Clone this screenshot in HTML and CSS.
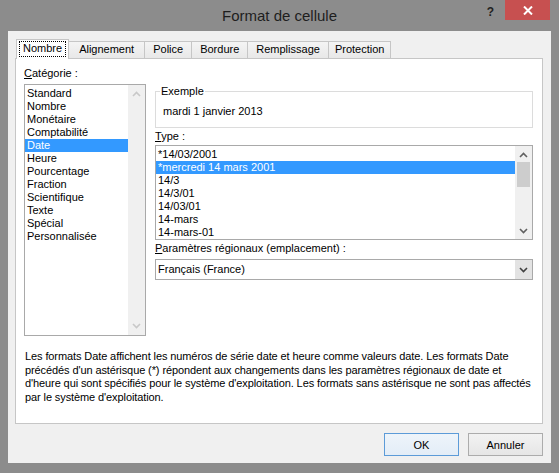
FILE: index.html
```html
<!DOCTYPE html>
<html lang="fr">
<head>
    <meta charset="UTF-8">
    <title>Format de cellule</title>
    <link rel="stylesheet" href="styles.css">
</head>
<body>
    <div class="window">
        <div class="titlebar">
            <span></span>
            <div class="title">Format de cellule</div>
            <div class="controls">
                <span class="help">?</span>
                <span class="close">
                    <svg width="10" height="9" viewBox="0 0 10 9"><path d="M1 0.5 L9 8.5 M9 0.5 L1 8.5" stroke="#fff" stroke-width="2"/></svg>
                </span>
            </div>
        </div>

        <div class="client">
            <div class="tabs">
                <div class="tab tab-active"><span class="focus">Nombre</span></div>
                <div class="tab tab-wide">Alignement</div>
                <div class="tab">Police</div>
                <div class="tab">Bordure</div>
                <div class="tab">Remplissage</div>
                <div class="tab tab-narrow">Protection</div>
            </div>

            <div class="panel">
                <div class="columns">
                    <div class="col-left">
                        <div class="label"><u>C</u>atégorie :</div>
                        <div class="listbox cat-list">
                            <ul class="items">
                                <li>Standard</li>
                                <li>Nombre</li>
                                <li>Monétaire</li>
                                <li>Comptabilité</li>
                                <li class="selected">Date</li>
                                <li>Heure</li>
                                <li>Pourcentage</li>
                                <li>Fraction</li>
                                <li>Scientifique</li>
                                <li>Texte</li>
                                <li>Spécial</li>
                                <li>Personnalisée</li>
                            </ul>
                            <div class="scrollbar scrollbar-disabled">
                                <svg class="arrow" width="9" height="6" viewBox="0 0 9 6"><path d="M1 5 L4.5 1.5 L8 5" fill="none" stroke="currentColor" stroke-width="1.6"/></svg>
                                <span class="track"></span>
                                <svg class="arrow" width="9" height="6" viewBox="0 0 9 6"><path d="M1 1 L4.5 4.5 L8 1" fill="none" stroke="currentColor" stroke-width="1.6"/></svg>
                            </div>
                        </div>
                    </div>

                    <div class="col-right">
                        <fieldset class="sample">
                            <legend>Exemple</legend>
                            <div class="sample-value">mardi 1 janvier 2013</div>
                        </fieldset>

                        <div class="label label-type"><u>T</u>ype :</div>
                        <div class="listbox type-list">
                            <ul class="items">
                                <li>*14/03/2001</li>
                                <li class="selected">*mercredi 14 mars 2001</li>
                                <li>14/3</li>
                                <li>14/3/01</li>
                                <li>14/03/01</li>
                                <li>14-mars</li>
                                <li>14-mars-01</li>
                            </ul>
                            <div class="scrollbar">
                                <svg class="arrow" width="9" height="6" viewBox="0 0 9 6"><path d="M1 5 L4.5 1.5 L8 5" fill="none" stroke="currentColor" stroke-width="1.6"/></svg>
                                <span class="track"><span class="thumb"></span></span>
                                <svg class="arrow" width="9" height="6" viewBox="0 0 9 6"><path d="M1 1 L4.5 4.5 L8 1" fill="none" stroke="currentColor" stroke-width="1.6"/></svg>
                            </div>
                        </div>

                        <div class="label label-locale"><u>P</u>aramètres régionaux (emplacement) :</div>
                        <div class="select">
                            <span class="select-value">Français (France)</span>
                            <span class="select-btn">
                                <svg width="9" height="6" viewBox="0 0 9 6"><path d="M1 1 L4.5 4.5 L8 1" fill="none" stroke="currentColor" stroke-width="1.6"/></svg>
                            </span>
                        </div>
                    </div>
                </div>

                <p class="desc">
                    Les formats Date affichent les numéros de série date et heure comme valeurs date. Les formats Date<br>
                    précédés d'un astérisque (*) répondent aux changements dans les paramètres régionaux de date et<br>
                    d'heure qui sont spécifiés pour le système d'exploitation. Les formats sans astérisque ne sont pas affectés<br>
                    par le système d'exploitation.
                </p>
            </div>

            <div class="actions">
                <button class="btn btn-default">OK</button>
                <button class="btn">Annuler</button>
            </div>
        </div>
    </div>
</body>
</html>
```

FILE: styles.css
```css
:root {
    --frame: #8c8c8c;
    --client: #f0f0f0;
    --border: #c6c6c6;
    --list-border: #a9a9a9;
    --highlight: #3399ff;
    --font: #000;
}

*,
*::before,
*::after {
    box-sizing: border-box;
    padding: 0;
    margin: 0;
}

body {
    background-color: var(--frame);
    color: var(--font);
    font-family: 'Liberation Sans', Arial, sans-serif;
    font-size: 11px;
    line-height: 13px;
}

button {
    color: inherit;
    font-family: inherit;
    font-size: inherit;
    cursor: pointer;
    outline: none;
}

.window {
    width: 559px;
    height: 473px;
    background-color: var(--frame);
    display: flex;
    flex-direction: column;
}

/* title bar */
.titlebar {
    height: 31px;
    display: grid;
    grid-template-columns: 1fr auto 1fr;
    align-items: start;
}

.title {
    font-size: 15px;
    line-height: 18px;
    padding-top: 7px;
    color: #1e1e1e;
}

.controls {
    display: flex;
    justify-content: flex-end;
    align-items: flex-start;
    padding-right: 9px;
}

.help {
    font-weight: bold;
    font-size: 12px;
    line-height: 14px;
    padding-top: 5px;
    margin-right: 11px;
    color: #222;
}

.close {
    width: 45px;
    height: 20px;
    background-color: #c75050;
    display: flex;
    align-items: center;
    justify-content: center;
}

/* client area */
.client {
    flex: 1;
    margin: 0 8px 10px;
    padding: 8px 8px 7px 7px;
    background-color: var(--client);
    display: flex;
    flex-direction: column;
}

.tabs {
    display: flex;
    align-items: flex-end;
    height: 20px;
    margin-bottom: -1px;
    padding-left: 1px;
    position: relative;
    z-index: 1;
}

.tab {
    height: 17px;
    margin-bottom: 1px;
    padding: 0 8px;
    border: 1px solid var(--border);
    border-bottom: none;
    border-left: none;
    background: linear-gradient(#f4f4f4, #e8e8e8);
    line-height: 15px;
}

.tab-wide {
    padding: 0 10px;
}

.tab-narrow {
    padding: 0 6px;
}

.tab-active {
    height: 20px;
    margin-bottom: 0;
    padding: 1px 2px 0;
    border-left: 1px solid var(--border);
    background: #fff;
}

.focus {
    display: block;
    padding: 1px 4px 2px;
    outline: 1px dotted #000;
    outline-offset: -1px;
    line-height: 13px;
}

.panel {
    height: 366px;
    border: 1px solid var(--border);
    background-color: #fff;
    padding: 8px 9px 0 8px;
}

.columns {
    display: flex;
    gap: 9px;
}

.col-left {
    width: 122px;
}

.col-right {
    flex: 1;
    padding-top: 18px;
}

.label {
    margin-bottom: 4px;
}

.label-type {
    margin-top: 2px;
    margin-bottom: 2px;
}

.label-locale {
    margin-top: 2px;
    margin-bottom: 4px;
}

/* list boxes */
.listbox {
    display: flex;
    border: 1px solid var(--list-border);
    background-color: #fff;
}

.cat-list {
    height: 252px;
}

.type-list {
    height: 95px;
}

.items {
    flex: 1;
    list-style: none;
    padding-top: 2px;
}

.items li {
    height: 13px;
    padding-left: 2px;
    white-space: nowrap;
}

.items .selected {
    background-color: var(--highlight);
    color: #fff;
}

.scrollbar {
    width: 17px;
    display: flex;
    flex-direction: column;
    align-items: center;
    background-color: #f0f0f0;
    color: #606060;
    padding: 6px 0 5px;
}

.scrollbar-disabled {
    color: #c8c8c8;
    padding-bottom: 6px;
}

.track {
    flex: 1;
    width: 100%;
    padding: 4px 2px 0;
}

.thumb {
    display: block;
    height: 25px;
    background-color: #cdcdcd;
}

/* sample group */
.sample {
    border: 1px solid #dcdcdc;
    padding: 7px 7px 6px;
    height: 43px;
}

.sample legend {
    padding: 0 1px;
    margin-left: -3px;
}

/* drop-down */
.select {
    display: flex;
    height: 21px;
    border: 1px solid var(--list-border);
}

.select-value {
    flex: 1;
    padding: 3px 2px 0;
}

.select-btn {
    width: 17px;
    display: flex;
    align-items: center;
    justify-content: center;
    background-color: #e3e3e3;
    color: #404040;
}

.desc {
    margin-top: 14px;
    padding-left: 1px;
    line-height: 13.7px;
    letter-spacing: -0.1px;
    white-space: nowrap;
}

/* buttons */
.actions {
    display: flex;
    justify-content: flex-end;
    gap: 9px;
    margin-top: 9px;
}

.btn {
    width: 75px;
    height: 23px;
    border: 1px solid #acacac;
    background: linear-gradient(#f2f2f2, #e6e6e6);
}

.btn-default {
    border-color: #5c9bd8;
    background: linear-gradient(#eef4fa, #e3edf7);
}
```
